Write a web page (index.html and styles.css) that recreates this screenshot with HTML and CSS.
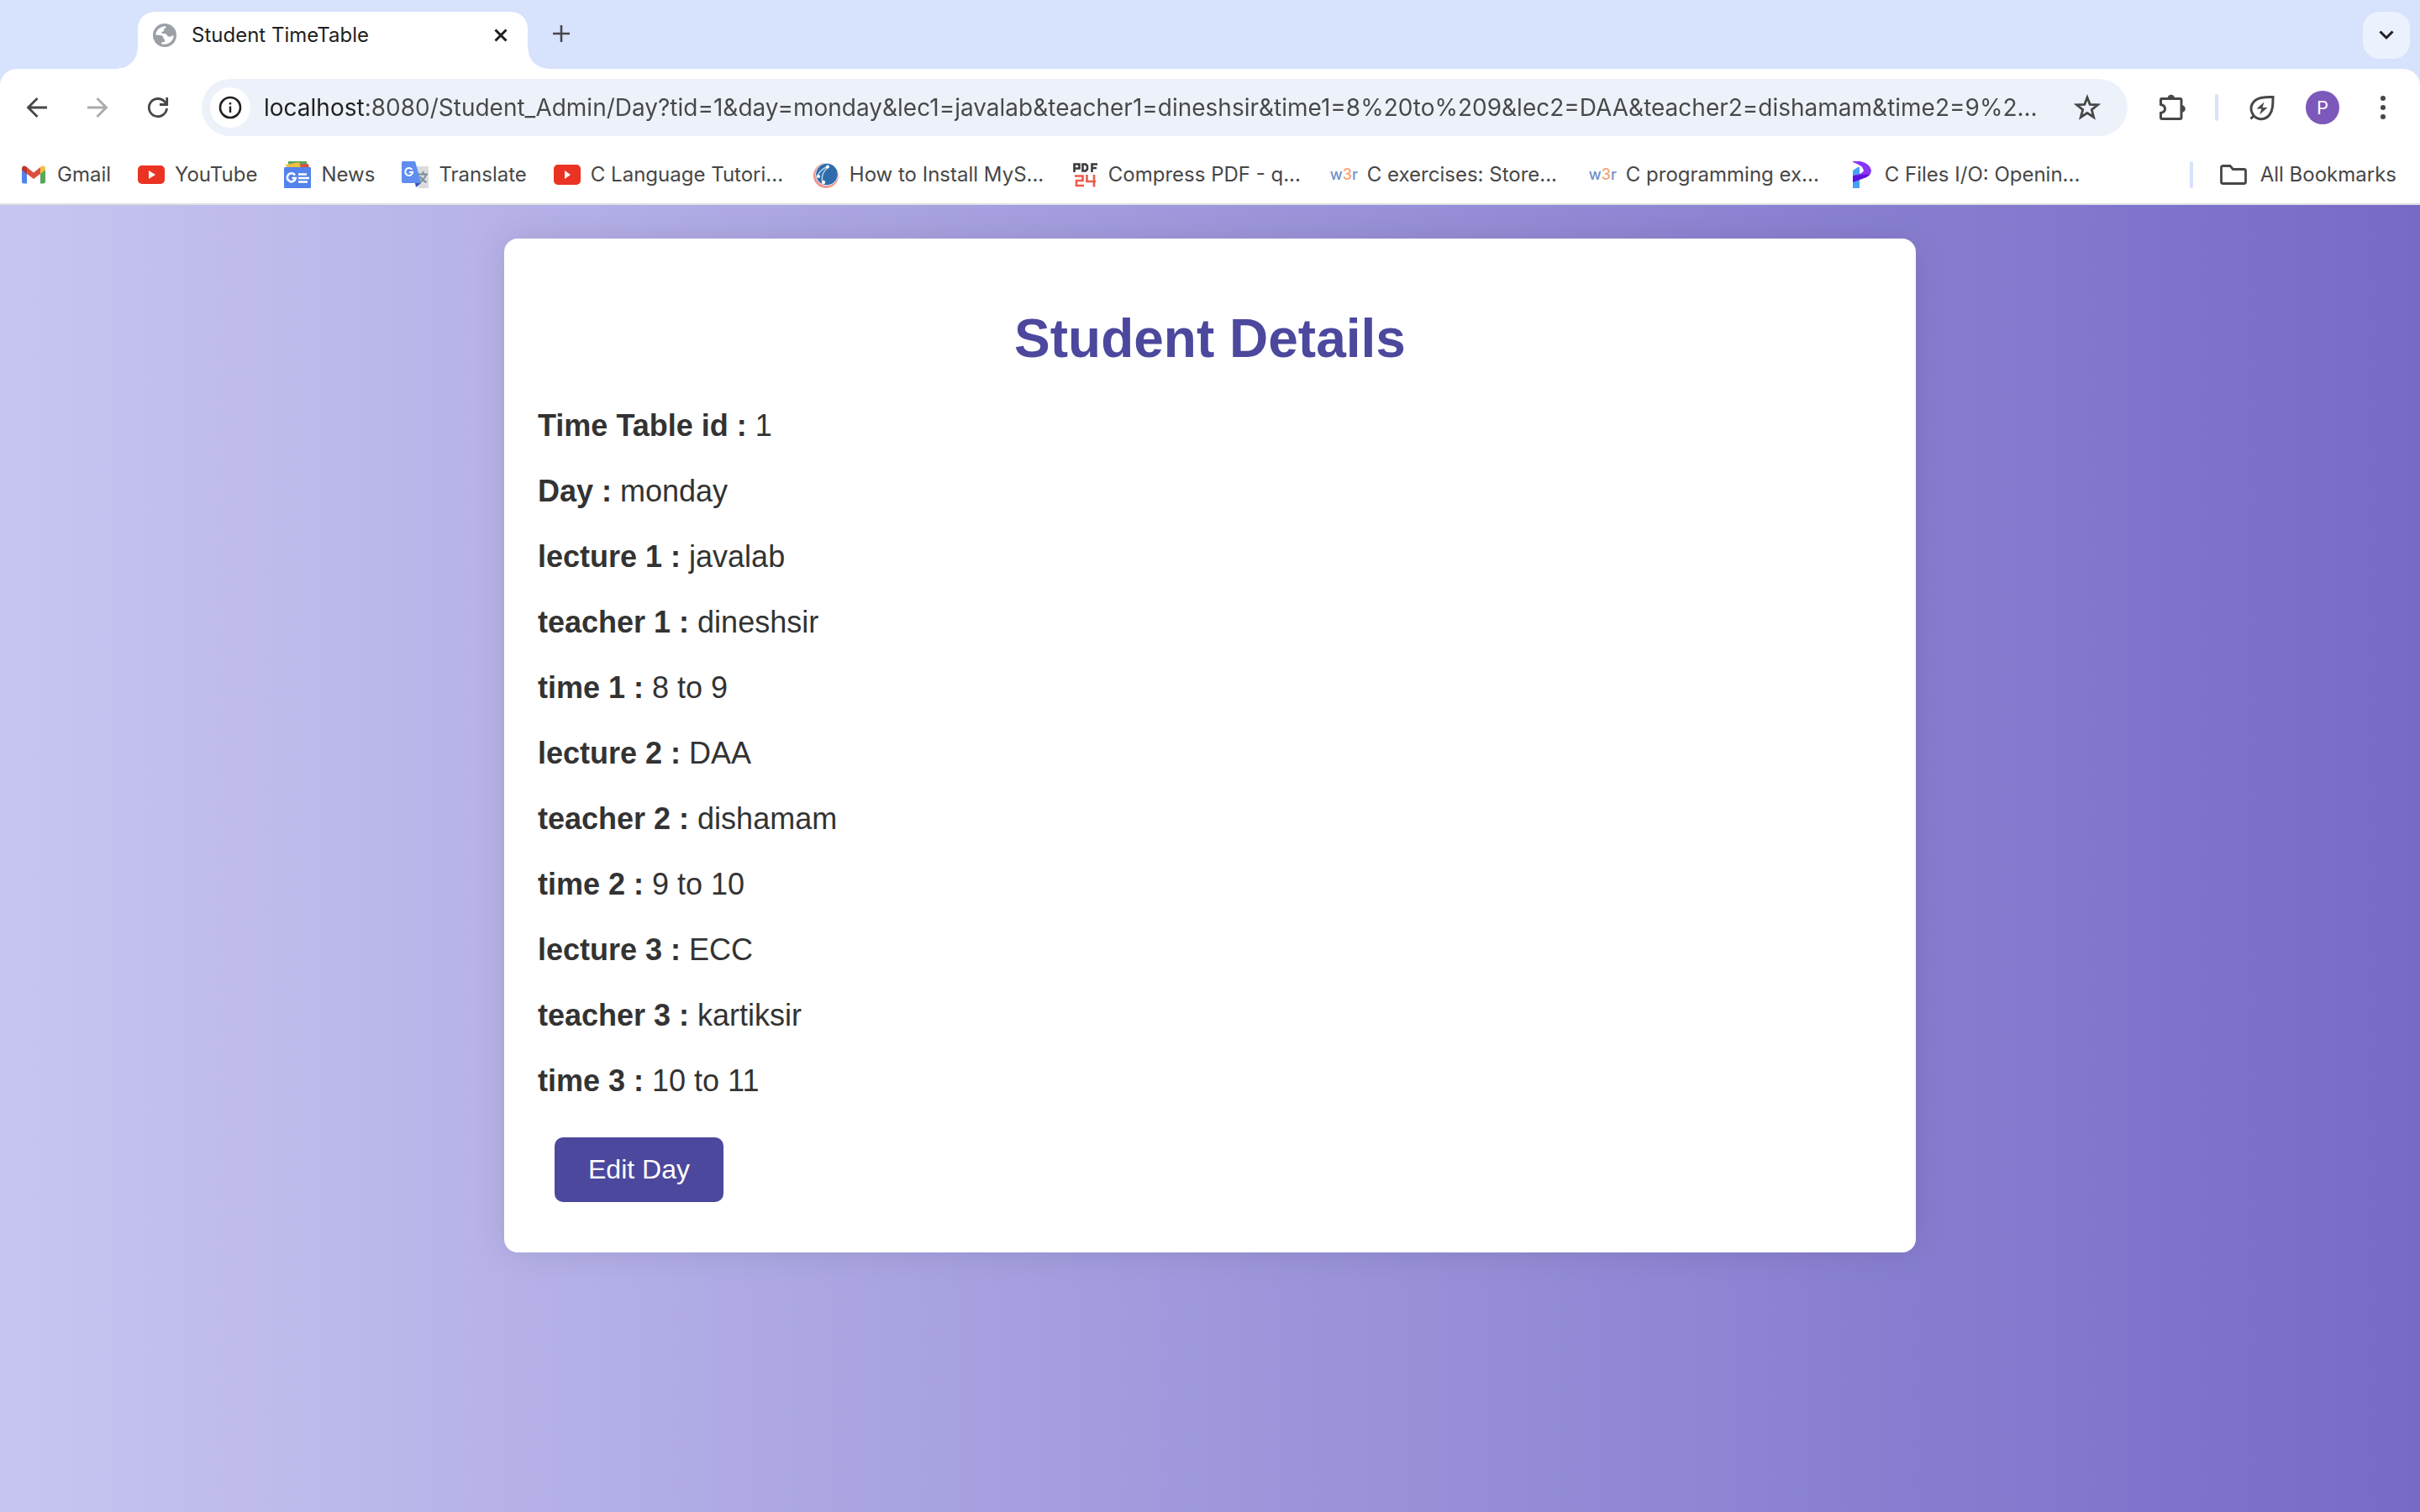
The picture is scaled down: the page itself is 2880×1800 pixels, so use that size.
FILE: index.html
```html
<!DOCTYPE html>
<html lang="en">
<head>
<meta charset="utf-8">
<title>Student TimeTable</title>
<link rel="stylesheet" href="styles.css">
</head>
<body>
<header class="browser">
  <div class="tabstrip">
    <div class="tab">
      <svg class="tab-favicon" viewBox="0 0 28 28" aria-hidden="true"><circle cx="14" cy="14" r="14" fill="#9aa0a6"/><path fill="#fff" d="M3.300 13.500C3.500 8 8.500 3.500 14.500 3.200C16.200 3.400 16 5 14.500 5.500C13 6 13 7 13.200 8C13 9.500 11.500 9.500 10.500 10C10 11 10.500 12 11.500 12H14.500C16.500 12.300 16.500 14.500 17.800 15.300C19.500 16 22 15.600 24.700 13.800C24.800 19.500 20.500 24.200 14.800 24.700H10.300V22.500C12.500 22 14.300 22.300 14.300 20.500C14.300 19 12.300 18.500 12.200 16.300C12 14.500 10 14 8 14Z"/></svg>
      <span class="tab-title">Student TimeTable</span>
      <button class="tab-close" aria-label="Close tab"><svg width="16" height="16" viewBox="0 0 16 16"><path d="M1.500 1.500L14.500 14.500M14.500 1.500L1.500 14.500" fill="none" stroke="#1f1f1f" stroke-width="3"/></svg></button>
    </div>
    <button class="tab-new" aria-label="New tab"><svg width="20" height="20" viewBox="0 0 20 20"><path d="M10 0V20M0 10H20" fill="none" stroke="#474747" stroke-width="2.600"/></svg></button>
    <button class="tab-search" aria-label="Search tabs"><svg width="18" height="12" viewBox="0 0 18 12"><path d="M1.500 1.500L9 9L16.500 1.500" fill="none" stroke="#1f1f1f" stroke-width="3"/></svg></button>
  </div>

  <div class="toolbar">
    <button class="tool" aria-label="Back"><svg width="28" height="28" viewBox="0 0 28 28"><path d="M26 14H4M14.500 3L3.500 14L14.500 25" fill="none" stroke="#474747" stroke-width="2.800"/></svg></button>
    <button class="tool" aria-label="Forward" disabled><svg width="28" height="28" viewBox="0 0 28 28"><path d="M2 14H24M13.500 3L24.500 14L13.500 25" fill="none" stroke="#ababab" stroke-width="2.800"/></svg></button>
    <button class="tool tool-reload" aria-label="Reload"><svg width="28" height="28" viewBox="0 0 28 28"><path d="M24.500 15A10.600 10.600 0 1 1 22 7.200L24.500 10M24.700 2V10.500H16" fill="none" stroke="#474747" stroke-width="2.800"/></svg></button>
    <div class="omnibox">
      <button class="site-info" aria-label="View site information"><svg width="28" height="28" viewBox="0 0 28 28"><circle cx="14" cy="14" r="12" fill="none" stroke="#1f1f1f" stroke-width="2.600"/><path d="M14 12.500V20M14 8V10.500" stroke="#1f1f1f" stroke-width="2.400"/></svg></button>
      <input class="url" type="text" aria-label="Address bar" value="localhost:8080/Student_Admin/Day?tid=1&amp;day=monday&amp;lec1=javalab&amp;teacher1=dineshsir&amp;time1=8%20to%209&amp;lec2=DAA&amp;teacher2=dishamam&amp;time2=9%2...">
      <button class="star" aria-label="Bookmark this tab"><svg width="32" height="32" viewBox="0 0 32 32"><path d="M16 4L19.200 12.300L28.500 12.800L21.300 18.600L23.700 27.500L16 22.500L8.300 27.500L10.700 18.600L3.500 12.800L12.800 12.300Z" fill="none" stroke="#474747" stroke-width="2.800"/></svg></button>
    </div>
    <button class="tool tool-ext" aria-label="Extensions"><svg width="34" height="34" viewBox="0 0 34 34"><path d="M4 6.500H26.500Q28 6.500 28 8V29Q28 30.500 26.500 30.500H5Q3.500 30.500 3.500 29V23.500Q8.500 22.500 8.500 18.500Q8.500 14.500 3.500 13.500V7.500Q3.500 6.500 4.500 6.500Z" fill="none" stroke="#474747" stroke-width="3"/><path d="M11.500 6A4.300 4.300 0 0 1 20.100 6ZM28.500 14.200A4.300 4.300 0 0 1 28.500 22.800Z" fill="#474747"/></svg></button>
    <span class="divider"></span>
    <button class="tool tool-leaf" aria-label="Energy saver"><svg width="32" height="32" viewBox="0 0 32 32"><path d="M2.500 29.500L6 26M6 25.500C0.500 18 3 10.500 9.500 6.500C15 3 21 3.500 29 3.500C29 12 29 19 25 24.500C20 31 11.500 31.500 6 25.500Z" fill="none" stroke="#474747" stroke-width="3"/><path d="M18.500 9.500L9.500 17.500H15.500L13 24.500L22.500 16H16.500Z" fill="#474747"/></svg></button>
    <button class="avatar" aria-label="Profile">P</button>
    <button class="tool tool-menu" aria-label="Menu"><svg width="8" height="32" viewBox="0 0 8 32"><g fill="#474747"><circle cx="4" cy="5" r="3"/><circle cx="4" cy="16" r="3"/><circle cx="4" cy="27" r="3"/></g></svg></button>
  </div>

  <nav class="bookmarks" aria-label="Bookmarks">
    <a class="bookmark" href="#"><svg viewBox="0 0 32 32"><path d="M2 9V24Q2 26.500 4.500 26.500H8V13Z" fill="#4f83ee"/><path d="M24 13V26.500H27.500Q30 26.500 30 24V9Z" fill="#58a55c"/><path d="M8 7L16 13.500L24 7V15L16 21L8 15Z" fill="#d95040"/><path d="M2 9Q2 5.500 5 5.500Q6.500 5.500 8 7V15L2 10.500Z" fill="#b7342c"/><path d="M30 9Q30 5.500 27 5.500Q25.500 5.500 24 7V15L30 10.500Z" fill="#f2bf42"/></svg><span>Gmail</span></a>
    <a class="bookmark" href="#"><svg viewBox="0 0 32 32"><rect y="5" width="32" height="22" rx="5" fill="#ea3323"/><path d="M13 11L21 16L13 21Z" fill="#fff"/></svg><span>YouTube</span></a>
    <a class="bookmark" href="#"><svg viewBox="0 0 32 32"><path d="M5 0H27V8H5Z" fill="#58a55c"/><path d="M17 4L29 3L30 8H17Z" fill="#d95040"/><path d="M2 4L18 1L20 8H3Z" fill="#f2bf42"/><rect y="7" width="32" height="25" rx="1" fill="#5383ec"/><path d="M13 16.500A5 5 0 1 0 13.800 20H9.500" fill="none" stroke="#fff" stroke-width="2.600"/><path d="M17 15.500H27M17 20H30M17 24.500H28" stroke="#fff" stroke-width="2.600"/></svg><span>News</span></a>
    <a class="bookmark" href="#"><svg viewBox="0 0 32 32"><path d="M12 6H31Q32 6 32 7V32H20Z" fill="#dcdcdc"/><path d="M16 26H23L17 31Z" fill="#3a4fc0"/><path d="M1 0H16L23.500 26H2Q0 26 0 24V1Z" fill="#5f8df0"/><path d="M12.500 10A4.500 4.500 0 1 0 13.200 13H9" fill="none" stroke="#fff" stroke-width="2"/><path d="M20 15.500H31M25.500 12V15.500M29 15.500Q27 22 21.500 25M22 18Q25 23 29.500 25" fill="none" stroke="#78909c" stroke-width="2"/></svg><span>Translate</span></a>
    <a class="bookmark bookmark-long" href="#"><svg viewBox="0 0 32 32"><rect y="4" width="32" height="24" rx="5" fill="#ea3323"/><path d="M13 11L20 16L13 21Z" fill="#fff"/></svg><span>C Language Tutori...</span></a>
    <a class="bookmark bookmark-long" href="#"><svg viewBox="0 0 32 32"><circle cx="16" cy="17" r="15" fill="#f0968f"/><circle cx="17" cy="15.500" r="13.500" fill="#fff"/><circle cx="17" cy="15.500" r="12.800" fill="#2f6cab"/><path d="M6 17Q10 9 19 6M12 25Q9 14 19 7" fill="none" stroke="#bcd6ec" stroke-width="1.500"/><circle cx="18" cy="6.500" r="2" fill="#fff"/><circle cx="7" cy="18" r="2" fill="#fff"/><circle cx="13" cy="25" r="2.200" fill="#fff"/></svg><span>How to Install MyS...</span></a>
    <a class="bookmark bookmark-long" href="#"><svg viewBox="0 0 32 32"><path d="M3.500 13V3.500H9.500V8.500H4M13.500 3.500H17L19 5.500V9.500L17 11.500H13.500ZM24.500 13V3.500H31M24.500 8H30" fill="none" stroke="#3a3a3a" stroke-width="2.600"/><path d="M4 17.500H13.500V23H6V29H15M18.500 16V24H29M27 16V30.500" fill="none" stroke="#ee5a49" stroke-width="2.600"/></svg><span>Compress PDF - q...</span></a>
    <a class="bookmark bookmark-long" href="#"><span class="w3r">w<b>3</b>r</span><span>C exercises: Store...</span></a>
    <a class="bookmark bookmark-long" href="#"><span class="w3r">w<b>3</b>r</span><span>C programming ex...</span></a>
    <a class="bookmark bookmark-long" href="#"><svg viewBox="0 0 32 32"><path d="M6 11L12 7H14V32H6Z" fill="#45a3f5"/><path d="M6 0H15Q27 3 28 11Q28 18 18 20.500L6 25V17Q18 15 19 11Q18 5 6 1Z" fill="#8a35f2"/><path d="M6 17L26 15.500Q23 19 18 20.500L6 25Z" fill="#5b12e0"/></svg><span>C Files I/O: Openin...</span></a>
    <span class="divider divider-end"></span>
    <a class="bookmark bookmark-all" href="#"><svg viewBox="0 0 32 32"><path d="M3.500 5.500H12L15.500 9.500H28.500Q30.500 9.500 30.500 11.500V24.500Q30.500 26.500 28.500 26.500H3.500Q1.500 26.500 1.500 24.500V7.500Q1.500 5.500 3.500 5.500Z" fill="none" stroke="#474747" stroke-width="2.800"/></svg><span>All Bookmarks</span></a>
  </nav>
</header>

<main class="page">
  <section class="card">
    <h1 class="card-title">Student Details</h1>
    <div class="details">
      <p><strong>Time Table id :</strong> 1</p>
      <p><strong>Day :</strong> monday</p>
      <p><strong>lecture 1 :</strong> javalab</p>
      <p><strong>teacher 1 :</strong> dineshsir</p>
      <p><strong>time 1 :</strong> 8 to 9</p>
      <p><strong>lecture 2 :</strong> DAA</p>
      <p><strong>teacher 2 :</strong> dishamam</p>
      <p><strong>time 2 :</strong> 9 to 10</p>
      <p><strong>lecture 3 :</strong> ECC</p>
      <p><strong>teacher 3 :</strong> kartiksir</p>
      <p><strong>time 3 :</strong> 10 to 11</p>
    </div>
    <button class="edit">Edit Day</button>
  </section>
</main>
</body>
</html>
```
FILE: styles.css
```css
* {
  box-sizing: border-box;
}

body {
  margin: 0;
  min-height: 100vh;
  display: flex;
  flex-direction: column;
  font-family: "Liberation Sans", Arial, sans-serif;
  color: #333;
}

button {
  border: 0;
  padding: 0;
  background: none;
  font: inherit;
  display: flex;
  align-items: center;
  justify-content: center;
}

svg {
  display: block;
  flex: none;
}

/* Browser frame */
.browser {
  font-family: Inter, "Noto Sans", sans-serif;
  font-size: 24px;
  line-height: 32px;
  background: #d7e2fc;
  color: #474747;
  border-bottom: 2px solid #e0e1e2;
}

.tabstrip {
  display: flex;
  align-items: center;
  height: 82px;
  padding: 14px 12px 0 164px;
}

.tab {
  position: relative;
  display: flex;
  align-items: center;
  width: 464px;
  height: 68px;
  padding: 0 24px 12px 18px;
  border-radius: 20px 20px 0 0;
  background: #fff;
  color: #1f1f1f;
}

/* Flared feet that join the tab to the toolbar */
.tab::before,
.tab::after {
  content: "";
  position: absolute;
  bottom: 0;
  width: 24px;
  height: 24px;
}

.tab::before {
  right: 100%;
  background: radial-gradient(circle at 0 0, transparent 23px, #fff 24px);
}

.tab::after {
  left: 100%;
  background: radial-gradient(circle at 100% 0, transparent 23px, #fff 24px);
}

.tab-favicon {
  width: 28px;
  height: 28px;
}

.tab-title {
  flex: 1;
  margin-left: 18px;
}

.tab-new {
  margin: 0 auto 16px 30px;
}

.tab-search {
  width: 56px;
  height: 56px;
  margin-bottom: 12px;
  border-radius: 20px;
  background: #ecf2fd;
}

.toolbar {
  display: flex;
  align-items: center;
  padding: 12px 40px 12px 30px;
  border-radius: 20px 20px 0 0;
  background: #fff;
}

.tool {
  margin-right: 44px;
}

.tool-reload {
  margin-right: 38px;
}

.omnibox {
  flex: 1;
  display: flex;
  align-items: center;
  height: 68px;
  margin-right: 36px;
  padding: 0 32px 0 10px;
  border-radius: 34px;
  background: #edf2fa;
}

.site-info {
  width: 48px;
  height: 48px;
  border-radius: 50%;
  background: #fff;
}

/* The host name is drawn darker than the rest of the address */
.url {
  flex: 1;
  min-width: 0;
  margin: 0 16px;
  padding: 0;
  border: 0;
  outline: 0;
  font: 28px/40px Inter, "Noto Sans", sans-serif;
  background: linear-gradient(90deg, #1f1f1f 120px, #474747 120px);
  background-clip: text;
  color: transparent;
}

.divider {
  width: 4px;
  height: 32px;
  border-radius: 2px;
  background: #d7e2fc;
}

.tool-ext {
  margin-right: 34px;
}

.tool-leaf {
  margin: 0 36px;
}

.avatar {
  width: 40px;
  height: 40px;
  margin-right: 48px;
  border-radius: 50%;
  background: #7b58ba;
  color: #fff;
  font-size: 22px;
}

.tool-menu {
  margin-right: 0;
}

.bookmarks {
  display: flex;
  align-items: center;
  gap: 32px;
  height: 68px;
  padding: 0 28px 0 24px;
  background: #fff;
}

.bookmark {
  display: flex;
  align-items: center;
  gap: 12px;
  color: #474747;
  text-decoration: none;
  white-space: nowrap;
}

.bookmark svg {
  width: 32px;
  height: 32px;
}

.bookmark-long {
  width: 276px;
}

.w3r {
  width: 32px;
  font-size: 18px;
  font-weight: 500;
  color: #6d8fc9;
}

.w3r b {
  font-weight: 500;
  color: #f2a679;
}

.divider-end {
  margin-left: auto;
}

.bookmark-all {
  gap: 16px;
}

/* Student page */
.page {
  flex: 1;
  padding: 40px;
  background: linear-gradient(90deg, #c7c5f1, #766ac7);
}

.card {
  max-width: 1680px;
  margin: 0 auto;
  padding: 40px;
  border-radius: 16px;
  background: #fff;
  box-shadow: 0 0 40px rgba(0, 0, 0, 0.1);
}

.card-title {
  margin: 42px 0 46px;
  font-size: 64px;
  line-height: 74px;
  text-align: center;
  color: #4c489d;
}

.details {
  display: flex;
  flex-direction: column;
  gap: 36px;
  font-size: 36px;
  line-height: 42px;
}

.details p {
  margin: 0;
}

.edit {
  margin: 46px 20px 20px;
  padding: 20px 40px;
  border-radius: 10px;
  background: #4c489d;
  color: #fff;
  font-size: 32px;
  line-height: 37px;
}
```
